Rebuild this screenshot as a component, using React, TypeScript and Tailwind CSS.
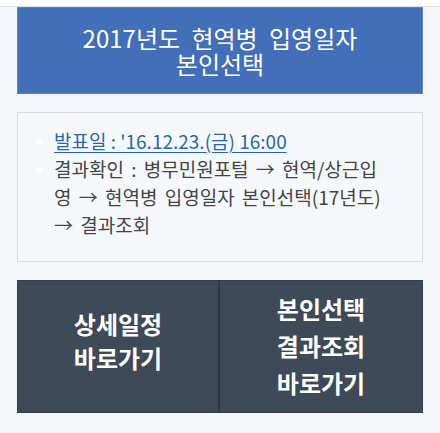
const font = { fontFamily: '"Noto Sans CJK KR", "Noto Sans", sans-serif' };

const Bullet = () => (
  <span className="absolute left-[-18px] top-[12px] h-[6px] w-[6px] rounded-full bg-white" />
);

export default function App() {
  return (
    <div className="min-h-[433px] w-[440px] bg-[#f4f7fa]" style={font}>
      <div className="h-[7px] border-b border-[#d9dee4] bg-white" />

      <div className="px-[17px]">
        <div className="flex h-[87px] flex-col items-center justify-center border border-[#5a80c2] bg-[#436fb9] text-center text-[24px] leading-[26px] text-white [word-spacing:6px]">
          <p>2017년도 현역병 입영일자</p>
          <p>본인선택</p>
        </div>

        <div className="mt-[18px] border border-[#d6dce2] bg-[#f5f8fb] pb-[22px] pl-[36px] pr-[10px] pt-[14px] text-[19px] leading-[28px] text-[#444] [word-spacing:3px]">
          <ul>
            <li className="relative">
              <Bullet />
              <a href="#" className="text-[#2b65ab] underline underline-offset-[3px] [word-spacing:0px]">
                발표일 : '16.12.23.(금) 16:00
              </a>
            </li>
            <li className="relative">
              <Bullet />
              결과확인 : 병무민원포털 → 현역/상근입
              <br />
              영 → 현역병 입영일자 본인선택(17년도)
              <br />→ 결과조회
            </li>
          </ul>
        </div>

        <div className="mt-[18px] grid h-[133px] grid-cols-2 border border-[#333d48] bg-[#3e4a57] text-center text-[24px] font-bold text-white">
          <a href="#" className="flex flex-col items-center justify-center border-r-2 border-[#2e3843] pb-[12px] leading-[34px]">
            <span>상세일정</span>
            <span>바로가기</span>
          </a>
          <a href="#" className="flex flex-col items-center justify-center pb-[2px] leading-[37px]">
            <span>본인선택</span>
            <span>결과조회</span>
            <span>바로가기</span>
          </a>
        </div>
      </div>
    </div>
  );
}
